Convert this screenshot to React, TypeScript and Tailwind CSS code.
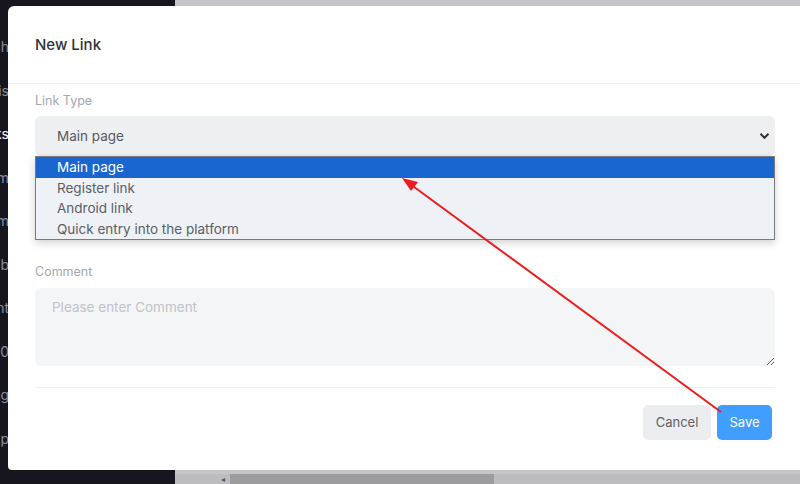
import { useState } from 'react';

const SIDE = [
  { label: 'Dash', tone: 'text-[#8e8e9c]' },
  { label: 'Lis', tone: 'text-[#8e8e9c]' },
  { label: 'Links', tone: 'text-white' },
  { label: 'Prom', tone: 'text-[#8e8e9c]' },
  { label: 'Team', tone: 'text-[#8e8e9c]' },
  { label: 'Feedb', tone: 'text-[#8e8e9c]' },
  { label: 'Content', tone: 'text-[#8e8e9c]' },
  { label: 'Top10', tone: 'text-[#8e8e9c]' },
  { label: 'Log', tone: 'text-[#8e8e9c]' },
  { label: 'Help', tone: 'text-[#8e8e9c]' },
] as const;

const OPTIONS = ['Main page', 'Register link', 'Android link', 'Quick entry into the platform'];

function Chevron() {
  return (
    <svg width="11" height="8" viewBox="0 0 11 8" aria-hidden>
      <path d="M1.5 1.8 5.5 5.8 9.5 1.8" fill="none" stroke="#333" strokeWidth="2" />
    </svg>
  );
}

export default function App() {
  const [selected] = useState(0);

  return (
    <div
      className="relative w-[800px] h-[484px] overflow-hidden bg-[#17161f] flex"
      style={{ fontFamily: 'Inter, "Noto Sans", sans-serif' }}
    >
      {/* sidebar behind the modal */}
      <aside className="w-[175px] shrink-0 pt-[37px] flex flex-col">
        {SIDE.map((item) => (
          <div key={item.label} className="h-[43.5px] flex justify-end w-[9px] whitespace-nowrap">
            <span className={`text-[14px] leading-[20px] ${item.tone}`}>{item.label}</span>
          </div>
        ))}
      </aside>

      {/* page behind the modal */}
      <main className="flex-1 flex flex-col bg-[#c6c6ca]">
        <div className="flex-1" />
        <div className="h-[10px] bg-[#bdbdc1] flex items-center">
          <span className="ml-[46px] text-[8px] leading-none text-[#555]">◂</span>
          <div className="ml-[5px] w-[264px] h-full bg-[#9c9c9e]" />
        </div>
      </main>

      {/* modal */}
      <div className="absolute left-[8px] top-[6px] w-[800px] h-[464px] bg-white rounded-tl-md rounded-bl-sm flex flex-col">
        <div className="h-[78px] shrink-0 flex items-center pl-[27px] pt-[2px] border-b border-[#f0f1f3]">
          <span className="text-[15px] text-[#333] font-medium">New Link</span>
        </div>

        <div className="ml-[27px] w-[740px] flex flex-col pt-[9px]">
          <label className="text-[12.5px] leading-4 text-[#a3a7ae]">Link Type</label>
          <div className="relative mt-[7px]">
            <div className="h-[40px] rounded-md bg-[#eeeff1] flex items-center justify-between pl-[22px] pr-[5px]">
              <span className="text-[13.5px] text-[#555a60]">{OPTIONS[selected]}</span>
              <Chevron />
            </div>
            <ul className="absolute left-0 right-0 top-[40px] z-10 border border-[#7a7a7a] bg-[#eef1f5] shadow-[0_3px_8px_rgba(0,0,0,0.18)]">
              {OPTIONS.map((opt, i) => (
                <li
                  key={opt}
                  className={`h-[20.5px] flex items-center pl-[21px] text-[13.5px] ${
                    i === selected ? 'bg-[#1a66d1] text-white' : 'text-[#5b5f66]'
                  }`}
                >
                  {opt}
                </li>
              ))}
            </ul>
          </div>

          <div className="h-[108px]" />

          <label className="text-[12.5px] leading-4 text-[#a3a7ae]">Comment</label>
          <textarea
            className="mt-[8px] h-[78px] rounded-md bg-[#f4f5f7] px-[17px] py-[9px] text-[13.5px] text-[#555] placeholder:text-[#c0c3c8] outline-none"
            placeholder="Please enter Comment"
          />

          <div className="mt-[21px] border-t border-[#f0f1f3]" />

          <div className="flex justify-end gap-[6px] pt-[17px] pr-[3px]">
            <button className="w-[68px] h-[35px] rounded-[5px] bg-[#ebedf0] text-[13px] text-[#606266]">
              Cancel
            </button>
            <button className="w-[55px] h-[35px] rounded-[5px] bg-[#409eff] text-[13px] text-white">
              Save
            </button>
          </div>
        </div>
      </div>

      {/* annotation arrow */}
      <svg className="absolute inset-0 z-20 pointer-events-none" width="800" height="484" aria-hidden>
        <line x1="721" y1="412" x2="410" y2="184" stroke="#ee1c1c" strokeWidth="2" />
        <path d="M402 178 L418 182 L411 191 Z" fill="#ee1c1c" />
      </svg>
    </div>
  );
}
